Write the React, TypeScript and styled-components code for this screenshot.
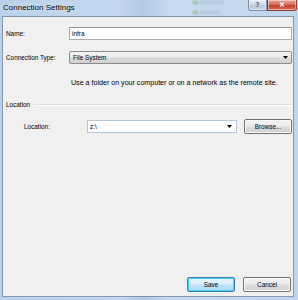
import React from "react";
import styled, { createGlobalStyle } from "styled-components";

const GlobalStyle = createGlobalStyle`
  html, body {
    margin: 0;
    padding: 0;
  }
  body {
    width: 298px;
    height: 300px;
    overflow: hidden;
    font-family: "Liberation Sans", Arial, sans-serif;
  }
`;

const Window = styled.div`
  width: 298px;
  height: 300px;
  box-sizing: border-box;
  display: flex;
  flex-direction: column;
  padding: 0 4px 3px 2px;
  background: linear-gradient(
    90deg,
    #b9d1ea 0%,
    #c3d8ee 40%,
    #b4cbe3 48%,
    #c7dbf0 58%,
    #c0d5ec 100%
  );
`;

const TitleBar = styled.div`
  position: relative;
  height: 16px;
  display: flex;
  align-items: flex-start;
  margin-left: -2px;
  margin-right: -4px;
`;

const Title = styled.div`
  padding: 3px 0 0 3px;
  font-size: 8px;
  line-height: 10px;
  color: #000;
  text-shadow: 0 0 4px rgba(255, 255, 255, 0.9);
`;

const Blob = styled.div<{ $left: number; $top: number; $width: number; $color: string }>`
  position: absolute;
  left: ${(p) => p.$left}px;
  top: ${(p) => p.$top}px;
  width: ${(p) => p.$width}px;
  height: 3px;
  background: ${(p) => p.$color};
  filter: blur(1px);
`;

const CaptionButtons = styled.div`
  position: absolute;
  top: 0;
  right: 1px;
  display: flex;
`;

const CaptionButton = styled.div<{ $close?: boolean }>`
  height: 11px;
  width: ${(p) => (p.$close ? "30px" : "19px")};
  box-sizing: border-box;
  display: flex;
  align-items: center;
  justify-content: center;
  border: 1px solid ${(p) => (p.$close ? "#8e3b32" : "#7e8ea3")};
  border-top: none;
  border-radius: ${(p) => (p.$close ? "0 0 3px 0" : "0 0 0 3px")};
  background: ${(p) =>
    p.$close
      ? "linear-gradient(180deg, #e8a291 0%, #d5705e 45%, #c5432e 55%, #d86b55 100%)"
      : "linear-gradient(180deg, #e7eef7 0%, #cfdbe9 45%, #b9c9dc 55%, #c9d7e7 100%)"};
  box-shadow: inset 0 0 0 1px rgba(255, 255, 255, 0.45);
  font-size: 7px;
  font-weight: bold;
  line-height: 8px;
  color: ${(p) => (p.$close ? "#fff" : "#4a5566")};
`;

const Body = styled.div`
  flex: 1;
  display: flex;
  flex-direction: column;
  background: #f0f0f0;
  border: 1px solid #8597ad;
  padding: 10px 1px 4px 3px;
  font-size: 6.4px;
  color: #000;
`;

const Row = styled.div<{ $indent?: number; $gap?: number }>`
  display: flex;
  align-items: center;
  margin-top: ${(p) => p.$gap ?? 0}px;
  padding-left: ${(p) => p.$indent ?? 0}px;
`;

const Label = styled.div<{ $width: number }>`
  width: ${(p) => p.$width}px;
  flex-shrink: 0;
  white-space: nowrap;
  line-height: 8px;
`;

const TextBox = styled.div`
  flex: 1;
  height: 13px;
  box-sizing: border-box;
  display: flex;
  align-items: center;
  padding-left: 2px;
  background: #fff;
  border: 1px solid #abadb3;
  border-top-color: #8e9196;
  line-height: 8px;
`;

const SelectBox = styled.div`
  flex: 1;
  height: 13px;
  box-sizing: border-box;
  display: flex;
  align-items: center;
  padding: 0 3px 0 3px;
  border: 1px solid #8a8a8a;
  border-radius: 2px;
  background: linear-gradient(180deg, #f3f3f3 0%, #ebebeb 48%, #dcdcdc 52%, #d2d2d2 100%);
  line-height: 8px;
`;

const ComboBox = styled(TextBox)<{ $width: number }>`
  flex: none;
  width: ${(p) => p.$width}px;
  padding-right: 4px;
  border-color: #b5c7d9;
`;

const Value = styled.span`
  flex: 1;
`;

const Arrow = () => (
  <svg width="5" height="3" viewBox="0 0 5 3">
    <path d="M0 0h5L2.5 3z" fill="#000" />
  </svg>
);

const Description = styled.div`
  margin: 15px 0 0 65px;
  font-size: 7.1px;
  line-height: 8px;
  white-space: nowrap;
`;

const GroupHeader = styled.div`
  display: flex;
  align-items: center;
  gap: 4px;
  margin-top: 14px;
  line-height: 8px;

  &::after {
    content: "";
    flex: 1;
    height: 0;
    border-top: 1px solid #d5dfe5;
    border-bottom: 1px solid #fff;
  }
`;

const Button = styled.div<{ $default?: boolean }>`
  width: 48px;
  height: 15px;
  flex-shrink: 0;
  box-sizing: border-box;
  display: flex;
  align-items: center;
  justify-content: center;
  border-radius: 2px;
  border: 1px solid ${(p) => (p.$default ? "#3c7fb1" : "#707070")};
  background: ${(p) =>
    p.$default
      ? "linear-gradient(180deg, #eaf6fd 0%, #d9f0fc 48%, #bee6fd 52%, #a7d9f5 100%)"
      : "linear-gradient(180deg, #f2f2f2 0%, #ebebeb 48%, #dddddd 52%, #cfcfcf 100%)"};
  box-shadow: ${(p) =>
    p.$default ? "inset 0 0 0 1px #48d0f8" : "inset 0 0 0 1px #fcfcfc"};
  line-height: 8px;
`;

const Spacer = styled.div`
  flex: 1;
`;

const Footer = styled.div`
  display: flex;
  justify-content: flex-end;
  gap: 8px;
  padding-right: 1px;
`;

export default function App() {
  return (
    <>
      <GlobalStyle />
      <Window>
        <TitleBar>
          <Blob $left={193} $top={1} $width={5} $color="rgba(120, 170, 80, 0.6)" />
          <Blob $left={200} $top={1} $width={24} $color="rgba(140, 160, 180, 0.35)" />
          <Blob $left={193} $top={11} $width={5} $color="rgba(120, 170, 80, 0.6)" />
          <Blob $left={200} $top={11} $width={20} $color="rgba(140, 160, 180, 0.35)" />
          <Title>Connection Settings</Title>
          <CaptionButtons>
            <CaptionButton>?</CaptionButton>
            <CaptionButton $close>✕</CaptionButton>
          </CaptionButtons>
        </TitleBar>
        <Body>
          <Row>
            <Label $width={63}>Name:</Label>
            <TextBox>infra</TextBox>
          </Row>
          <Row $gap={11}>
            <Label $width={63}>Connection Type:</Label>
            <SelectBox>
              <Value>File System</Value>
              <Arrow />
            </SelectBox>
          </Row>
          <Description>
            Use a folder on your computer or on a network as the remote site.
          </Description>
          <GroupHeader>Location</GroupHeader>
          <Row $gap={10} $indent={18}>
            <Label $width={63}>Location:</Label>
            <ComboBox $width={150}>
              <Value>z:\</Value>
              <Arrow />
            </ComboBox>
            <Spacer />
            <Button>Browse...</Button>
          </Row>
          <Spacer />
          <Footer>
            <Button $default>Save</Button>
            <Button>Cancel</Button>
          </Footer>
        </Body>
      </Window>
    </>
  );
}
